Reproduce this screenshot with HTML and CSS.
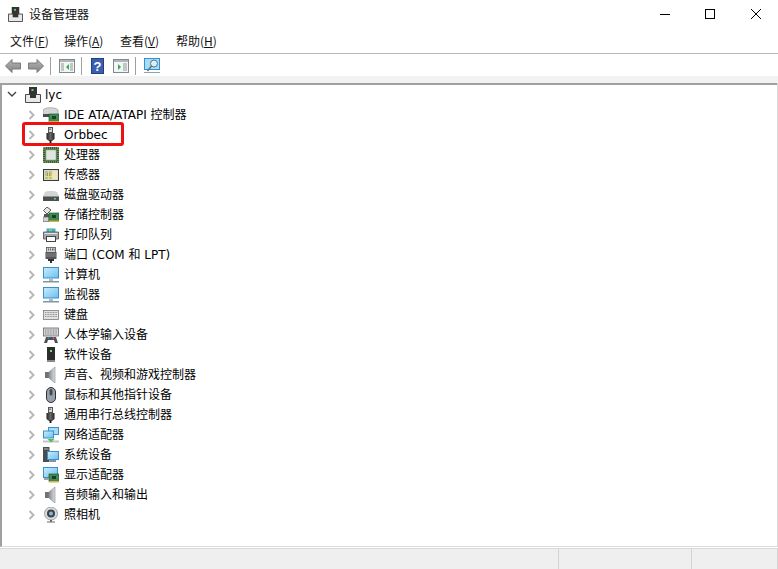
FILE: index.html
```html
<!DOCTYPE html>
<html lang="zh-CN">
<head>
<meta charset="utf-8">
<title>设备管理器</title>
<link rel="stylesheet" href="styles.css">
</head>
<body>
<svg class="defs" width="0" height="0">
  <defs>
    <linearGradient id="g-dark" x1="0" x2="1" y1="0" y2="0"><stop offset="0" stop-color="#222"/><stop offset=".5" stop-color="#6a6a6a"/><stop offset="1" stop-color="#222"/></linearGradient>
    <linearGradient id="g-screen" x1="0" x2="1" y1="0" y2="1"><stop offset="0" stop-color="#c6ecfc"/><stop offset="1" stop-color="#6fc0ee"/></linearGradient>
    <linearGradient id="g-cone" x1="0" x2="1" y1="0" y2="0"><stop offset="0" stop-color="#8a8d90"/><stop offset="1" stop-color="#dcdee0"/></linearGradient>
    <linearGradient id="g-arrow" x1="0" x2="0" y1="0" y2="1"><stop offset="0" stop-color="#b5b8b5"/><stop offset="1" stop-color="#7f827f"/></linearGradient>
    <symbol id="i-pc" viewBox="0 0 16 16">
      <rect x="4" y="0" width="8" height="8" fill="#333"/><rect x="6.500" y="2" width="2" height="2" fill="#5fd06a"/>
      <path d="M.5 7.500h15v8H.5z" fill="#e8e8e8" stroke="#4a4a4a"/><rect x="5" y="7" width="6" height="4" fill="#333"/>
    </symbol>
    <symbol id="i-ide" viewBox="0 0 16 16">
      <path d="M0 3C2 0 13 0 15 3V8H0z" fill="#d4d6d8" stroke="#8a8a8a" stroke-width=".6"/>
      <rect x="0" y="7" width="8" height="3" fill="#4b4b4b"/>
      <rect x="6" y="7" width="10" height="8" fill="#3f8a52" stroke="#245c33" stroke-width=".7"/>
      <rect x="9" y="9" width="4" height="3" fill="#1d3d27"/><rect x="6" y="14" width="10" height="1.500" fill="#d2b24a"/>
    </symbol>
    <symbol id="i-usb" viewBox="0 0 16 16">
      <rect x="5.500" y="0.500" width="4" height="5" fill="#d8d8d8" stroke="#555"/>
      <rect x="6.500" y="1.500" width="1" height="1.500" fill="#333"/>
      <path d="M3.500 6h8v6l-2.500 2h-3l-2.500-2z" fill="url(#g-dark)"/><rect x="6.500" y="13" width="2" height="3" fill="#222"/>
    </symbol>
    <symbol id="i-cpu" viewBox="0 0 16 16">
      <rect x="0" y="0" width="16" height="16" fill="#2f5f3a"/>
      <path d="M0 1h16M0 15h16M1 0v16M15 0v16" stroke="#c9b458" stroke-width="1" stroke-dasharray="1 1"/>
      <rect x="2" y="2" width="12" height="12" fill="#48774f"/>
      <rect x="3" y="3" width="10" height="10" fill="#dfe5df" stroke="#9aa79a" stroke-width=".6"/>
    </symbol>
    <symbol id="i-sensor" viewBox="0 0 16 16">
      <rect x=".5" y="2.500" width="15" height="11" fill="#d8d8d2" stroke="#3a3a3a"/>
      <rect x="2" y="4" width="7" height="8" fill="#a4cc8e"/><rect x="4" y="6" width="3" height="3" fill="#e0786a"/><path d="M2 9.500h7M5.500 4v8" stroke="#f2dc6a"/>
      <rect x="9" y="4" width="5.500" height="8" fill="#eee2b6"/>
    </symbol>
    <symbol id="i-disk" viewBox="0 0 16 16">
      <path d="M2 5C3 3.500 13 3.500 14 5l2 4v4H0V9z" fill="#d2d4d6"/>
      <rect x="0" y="9.500" width="16" height="4.500" fill="#4d4f52"/><rect x="11" y="11" width="2" height="1.500" fill="#50e05a"/>
    </symbol>
    <symbol id="i-store" viewBox="0 0 16 16">
      <path d="M4 0l4 3-4 4-3.500-3.500z" fill="#e4e6e8" stroke="#333" stroke-width=".8"/>
      <path d="M1 7h5v3H1z" fill="#555"/><path d="M0 10h6v4.500H0z" fill="#d0d2d4" stroke="#555" stroke-width=".6"/>
      <rect x="6" y="6" width="10" height="8" fill="#3f8a52" stroke="#245c33" stroke-width=".7"/>
      <rect x="9" y="8" width="4" height="3" fill="#1d3d27"/><rect x="6" y="13.500" width="10" height="1.500" fill="#d2b24a"/>
    </symbol>
    <symbol id="i-print" viewBox="0 0 16 16">
      <rect x="3.500" y="1.500" width="9" height="3.500" fill="#3fa9dc"/><rect x="6" y="1.500" width="3" height="3.500" fill="#6fcf8a"/>
      <path d="M.5 5h15v7h-3v-2h-9v2h-3z" fill="#a4a7ab" stroke="#4a4a4a" stroke-width=".8"/>
      <rect x="3.500" y="9.500" width="9" height="5" fill="#fff" stroke="#444" stroke-width="1"/>
      <rect x="1.500" y="6" width="13" height="1" fill="#e3e3e3"/>
    </symbol>
    <symbol id="i-port" viewBox="0 0 16 16">
      <rect x="3.500" y="0.500" width="9" height="5" fill="#d3d3d3" stroke="#555" stroke-width=".8"/>
      <path d="M5.500 1.500v2M7.500 1.500v2M9.500 1.500v2M11 1.500v2" stroke="#444" stroke-width=".8"/>
      <path d="M2.500 5h11v7h-11z" fill="#54575a"/><path d="M2.500 7h11M2.500 9h11" stroke="#85888c"/>
      <path d="M5 12h6v2H9v2H7v-2H5z" fill="#2f3032"/>
    </symbol>
    <symbol id="i-mon" viewBox="0 0 16 16">
      <rect x="0" y="0" width="16" height="11.500" fill="#3a8fcc"/>
      <rect x="1" y="1" width="14" height="9.500" fill="url(#g-screen)"/>
      <rect x="6" y="11.500" width="4" height="2.500" fill="#b4b8bb"/><rect x="0" y="14" width="16" height="1.500" fill="#7d98ac"/>
    </symbol>
    <symbol id="i-kbd" viewBox="0 0 16 16">
      <rect x=".5" y="3.500" width="15" height="9" fill="#dfe1e3" stroke="#7a7a7a" stroke-width=".8"/>
      <path d="M2 5.500h12M2 7.500h12M2 9.500h12" stroke="#8f9296" stroke-dasharray="1 .6"/>
    </symbol>
    <symbol id="i-hid" viewBox="0 0 16 16">
      <rect x=".5" y="1" width="15" height="8" fill="#d6d8da" stroke="#666" stroke-width=".8"/>
      <path d="M2 3h12M2 5h12M2 7h12" stroke="#7d7f82" stroke-dasharray="1 .6"/>
      <path d="M1 16l2-6h10l2 6h-3l-1-3H5l-1 3z" fill="#4d5155"/>
      <circle cx="5.500" cy="11" r="1" fill="#2d8acb"/><circle cx="10.500" cy="11" r="1" fill="#e0584a"/>
    </symbol>
    <symbol id="i-soft" viewBox="0 0 16 16">
      <rect x="4" y="0" width="8" height="13" fill="#2c2c2c"/><rect x="7" y="3" width="2" height="2" fill="#6fe06f"/>
      <rect x="4" y="13" width="8" height="2" fill="#8a8a8a"/>
    </symbol>
    <symbol id="i-sound" viewBox="0 0 16 16">
      <rect x="2" y="5" width="4" height="6" fill="#6f7376"/>
      <path d="M6 5l6-5v16l-6-5z" fill="url(#g-cone)" stroke="#8a8d90" stroke-width=".6"/>
    </symbol>
    <symbol id="i-mouse" viewBox="0 0 16 16">
      <rect x="3.500" y="0.500" width="9" height="15" rx="4.500" fill="#98a2ac" stroke="#2d3238"/>
      <rect x="6.500" y="2" width="3" height="6.500" rx="1.500" fill="#444a50"/>
    </symbol>
    <symbol id="i-net" viewBox="0 0 16 16">
      <rect x="5" y="0" width="11" height="8" fill="#3a8fcc"/><rect x="6" y="1" width="9" height="6" fill="#a7dcf7"/>
      <rect x="0" y="3.500" width="11" height="8" fill="#3a8fcc"/><rect x="1" y="4.500" width="9" height="6" fill="url(#g-screen)"/>
      <path d="M0 14.500h16" stroke="#c2c4c6" stroke-width="2"/><path d="M4.500 12h7L8 15.500z" fill="#4fbf5a"/>
    </symbol>
    <symbol id="i-sys" viewBox="0 0 16 16">
      <rect x="0" y="0" width="6.500" height="15" fill="#4a4d50"/><rect x="1" y="1.500" width="4.500" height="1" fill="#bbb"/>
      <rect x="4" y="4" width="12" height="9" fill="#3a8fcc"/><rect x="5" y="5" width="10" height="7" fill="url(#g-screen)"/>
      <rect x="7" y="13" width="6" height="2" fill="#8b9298"/>
    </symbol>
    <symbol id="i-disp" viewBox="0 0 16 16">
      <rect x="0" y="0" width="15" height="11" fill="#3a8fcc"/><rect x="1" y="1" width="13" height="9" fill="url(#g-screen)"/>
      <rect x="6" y="7" width="10" height="7.500" fill="#3f8a52" stroke="#245c33" stroke-width=".7"/>
      <rect x="9" y="9" width="4" height="3" fill="#1d3d27"/><rect x="6" y="14" width="10" height="1.500" fill="#d2b24a"/>
      <rect x="1" y="11" width="5" height="2" fill="#9fa3a6"/>
    </symbol>
    <symbol id="i-cam" viewBox="0 0 16 16">
      <circle cx="8" cy="6.500" r="6.500" fill="#d9dbdd" stroke="#8d9093" stroke-width=".8"/>
      <circle cx="8" cy="6.500" r="4" fill="#3f4347"/><circle cx="8" cy="6.500" r="2" fill="#8fb3d3"/>
      <path d="M7 13h2v1.500h3v1H4v-1h3z" fill="#6b6e71"/>
    </symbol>
    <symbol id="i-arrow" viewBox="0 0 8 10">
      <path d="M1.500 1l4 4-4 4" fill="none" stroke="#b8b8b8" stroke-width="2"/>
    </symbol>
  </defs>
</svg>

<div class="window">
  <header class="titlebar">
    <svg class="app-icon"><use href="#i-pc"/></svg>
    <span class="title">设备管理器</span>
    <div class="controls">
      <svg class="ctl" viewBox="0 0 46 28"><path d="M20 14.500h10" stroke="#000"/></svg>
      <svg class="ctl" viewBox="0 0 46 28"><rect x="19.500" y="9.500" width="9" height="9" fill="none" stroke="#000"/></svg>
      <svg class="ctl" viewBox="0 0 46 28"><path d="M19 9l10 10M29 9L19 19" stroke="#000" stroke-width="1" fill="none"/></svg>
    </div>
  </header>

  <nav class="menubar">
    <span class="menu">文件(<u>F</u>)</span>
    <span class="menu">操作(<u>A</u>)</span>
    <span class="menu">查看(<u>V</u>)</span>
    <span class="menu">帮助(<u>H</u>)</span>
  </nav>

  <div class="toolbar">
    <svg class="tool" viewBox="0 0 16 16"><path d="M.5 8l6.500-6.500v3.500h8.500v6H7v3.500z" fill="url(#g-arrow)" stroke="#777a77"/></svg>
    <svg class="tool" viewBox="0 0 16 16"><path d="M15.500 8L9 1.500v3.500H.5v6H9v3.500z" fill="url(#g-arrow)" stroke="#777a77"/></svg>
    <span class="sep"></span>
    <svg class="tool" viewBox="0 0 16 16"><rect x=".5" y="1.500" width="15" height="13" fill="#f4f4f4" stroke="#7f8a8f"/><rect x="1" y="2" width="14" height="2" fill="#aeb6ba"/><path d="M10 6v6L7 9z" fill="#2fae4a"/><path d="M2 6h3M2 8h3M2 10h3M2 12h3M11 6h3M11 8h3M11 10h3M11 12h3" stroke="#8f979b"/></svg>
    <span class="sep"></span>
    <svg class="tool help-btn" viewBox="0 0 13 16"><rect x=".5" y=".5" width="12" height="15" fill="#3a5fae" stroke="#203f86"/><text x="6.500" y="13" class="help">?</text></svg>
    <svg class="tool" viewBox="0 0 16 16"><rect x=".5" y="1.500" width="15" height="13" fill="#f4f4f4" stroke="#7f8a8f"/><rect x="1" y="2" width="14" height="2" fill="#aeb6ba"/><path d="M5 6v6l3-3z" fill="#2fae4a"/><path d="M10 6h4M10 8h4M10 10h4M10 12h4" stroke="#8f979b"/></svg>
    <span class="sep"></span>
    <svg class="tool" viewBox="0 0 16 16"><rect x=".5" y=".5" width="15" height="11" fill="#a7dcf7" stroke="#3a8fcc"/><circle cx="10" cy="5.500" r="3.500" fill="#d6effb" stroke="#5c7684"/><path d="M7.500 8L3.500 13" stroke="#5c7684" stroke-width="1.500"/><path d="M0 14.500h16" stroke="#8aa4b4"/></svg>
  </div>

  <main class="tree">
    <div class="row root">
      <svg class="caret" viewBox="0 0 10 8"><path d="M1 2l4 4 4-4" fill="none" stroke="#444" stroke-width="1.400"/></svg>
      <svg class="icon"><use href="#i-pc"/></svg>
      <span>lyc</span>
    </div>
    <div class="children">
      <div class="row"><svg class="arrow"><use href="#i-arrow"/></svg><svg class="icon"><use href="#i-ide"/></svg><span>IDE ATA/ATAPI 控制器</span></div>
      <div class="row marked"><svg class="arrow"><use href="#i-arrow"/></svg><svg class="icon"><use href="#i-usb"/></svg><span>Orbbec</span></div>
      <div class="row"><svg class="arrow"><use href="#i-arrow"/></svg><svg class="icon"><use href="#i-cpu"/></svg><span>处理器</span></div>
      <div class="row"><svg class="arrow"><use href="#i-arrow"/></svg><svg class="icon"><use href="#i-sensor"/></svg><span>传感器</span></div>
      <div class="row"><svg class="arrow"><use href="#i-arrow"/></svg><svg class="icon"><use href="#i-disk"/></svg><span>磁盘驱动器</span></div>
      <div class="row"><svg class="arrow"><use href="#i-arrow"/></svg><svg class="icon"><use href="#i-store"/></svg><span>存储控制器</span></div>
      <div class="row"><svg class="arrow"><use href="#i-arrow"/></svg><svg class="icon"><use href="#i-print"/></svg><span>打印队列</span></div>
      <div class="row"><svg class="arrow"><use href="#i-arrow"/></svg><svg class="icon"><use href="#i-port"/></svg><span>端口 (COM 和 LPT)</span></div>
      <div class="row"><svg class="arrow"><use href="#i-arrow"/></svg><svg class="icon"><use href="#i-mon"/></svg><span>计算机</span></div>
      <div class="row"><svg class="arrow"><use href="#i-arrow"/></svg><svg class="icon"><use href="#i-mon"/></svg><span>监视器</span></div>
      <div class="row"><svg class="arrow"><use href="#i-arrow"/></svg><svg class="icon"><use href="#i-kbd"/></svg><span>键盘</span></div>
      <div class="row"><svg class="arrow"><use href="#i-arrow"/></svg><svg class="icon"><use href="#i-hid"/></svg><span>人体学输入设备</span></div>
      <div class="row"><svg class="arrow"><use href="#i-arrow"/></svg><svg class="icon"><use href="#i-soft"/></svg><span>软件设备</span></div>
      <div class="row"><svg class="arrow"><use href="#i-arrow"/></svg><svg class="icon"><use href="#i-sound"/></svg><span>声音、视频和游戏控制器</span></div>
      <div class="row"><svg class="arrow"><use href="#i-arrow"/></svg><svg class="icon"><use href="#i-mouse"/></svg><span>鼠标和其他指针设备</span></div>
      <div class="row"><svg class="arrow"><use href="#i-arrow"/></svg><svg class="icon"><use href="#i-usb"/></svg><span>通用串行总线控制器</span></div>
      <div class="row"><svg class="arrow"><use href="#i-arrow"/></svg><svg class="icon"><use href="#i-net"/></svg><span>网络适配器</span></div>
      <div class="row"><svg class="arrow"><use href="#i-arrow"/></svg><svg class="icon"><use href="#i-sys"/></svg><span>系统设备</span></div>
      <div class="row"><svg class="arrow"><use href="#i-arrow"/></svg><svg class="icon"><use href="#i-disp"/></svg><span>显示适配器</span></div>
      <div class="row"><svg class="arrow"><use href="#i-arrow"/></svg><svg class="icon"><use href="#i-sound"/></svg><span>音频输入和输出</span></div>
      <div class="row"><svg class="arrow"><use href="#i-arrow"/></svg><svg class="icon"><use href="#i-cam"/></svg><span>照相机</span></div>
    </div>
  </main>

  <footer class="statusbar">
    <div class="cell grow"></div>
    <div class="cell mid"></div>
    <div class="cell last"></div>
  </footer>
</div>
</body>
</html>
```

FILE: styles.css
```css
*, *::after { box-sizing: border-box; }
html, body { margin: 0; height: 100%; }
body {
  background: #fff;
  color: #000;
  font-family: "Noto Sans CJK SC", "Noto Sans", sans-serif;
  font-size: 12px;
  overflow: hidden;
}
.defs { display: block; height: 0; }
.window { display: flex; flex-direction: column; width: 778px; height: 569px; }

.titlebar { display: flex; align-items: center; height: 28px; padding-left: 8px; flex: none; }
.app-icon { width: 15px; height: 15px; flex: none; }
.title { margin-left: 6px; font-size: 12px; color: #111; position: relative; top: -1px; }
.controls { display: flex; margin-left: auto; }
.ctl { width: 46px; height: 28px; }

.menubar {
  display: grid;
  grid-template-columns: 54px 56px 56px auto;
  justify-content: start;
  height: 26px;
  align-items: center;
  padding-left: 10px;
  flex: none;
  border-bottom: 1px solid #b9b9bd;
}
.menu { font-size: 12px; color: #111; }

.toolbar {
  display: flex;
  align-items: center;
  height: 29px;
  padding: 2px 0 0 5px;
  flex: none;
  border-bottom: 7px solid #f2f2f2;
}
.tool { width: 16px; height: 16px; flex: none; }
.tool + .tool { margin-left: 7px; }
.help-btn { width: 13px; margin-left: 1px; margin-right: 2px; }
.sep { width: 1px; height: 18px; background: #a0a0a0; flex: none; margin: 0 8px 0 6px; }

.tree {
  flex: 1;
  box-shadow: inset 0 2px #a0a0a0;
  border-left: 2px solid #a0a0a0;
  border-right: 1px solid #d8d8d8;
  border-bottom: 1px solid #dcdcdc;
  min-height: 0;
  overflow: hidden;
  font-family: "DejaVu Sans", "Noto Sans CJK SC", sans-serif;
}
.row { display: flex; align-items: center; height: 20px; padding-top: 4px; white-space: nowrap; }
.row span { line-height: 20px; }
.row.root { padding-left: 5px; }
.children .row { padding-left: 26px; }
.caret { width: 10px; height: 8px; flex: none; margin-top: -2px; }
.arrow { width: 8px; height: 10px; flex: none; }
.icon { width: 16px; height: 16px; flex: none; }
.root .icon { margin-left: 8px; }
.root span { margin-left: 4px; }
.children .icon { margin-left: 7px; }
.children span { margin-left: 5px; }
.row.marked { position: relative; }
.row.marked::after {
  content: "";
  position: absolute;
  left: 20px;
  top: -1px;
  width: 102px;
  height: 24px;
  border: 3px solid #f01010;
  border-radius: 3px;
}
.help { font: bold 13px "Liberation Sans", sans-serif; fill: #fff; text-anchor: middle; }

.statusbar { display: flex; height: 21px; flex: none; background: #efefef; border-top: 1px solid #d9d9d9; margin-top: 1px; }
.cell { border-right: 1px solid #d3d3d3; }
.grow { width: 559px; }
.mid { width: 133px; }
.last { flex: 1; }
```
